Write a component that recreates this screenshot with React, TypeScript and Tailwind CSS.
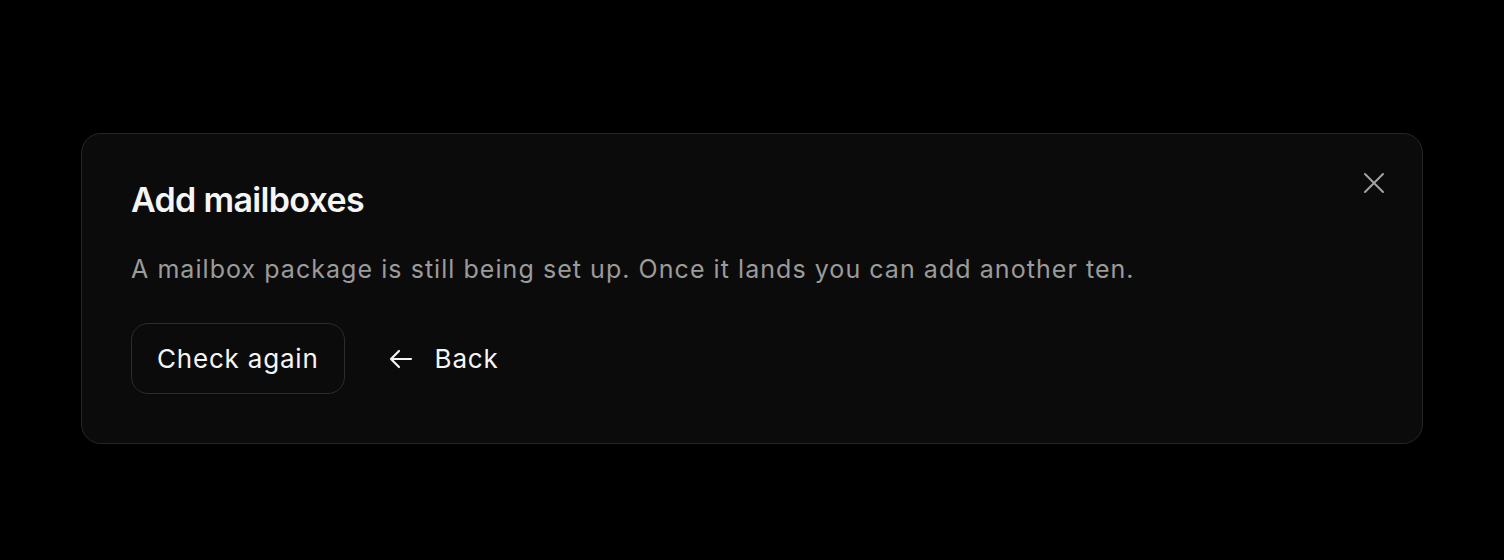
import React from "react";

export default function App() {
  return (
    <div className="min-h-[560px] w-full bg-black px-[81px] pt-[133px]" style={{ fontFamily: "Inter, 'Noto Sans', sans-serif" }}>
      <div className="relative rounded-[20px] border border-[#262626] bg-[#0b0b0b] px-[49px] pt-[46px] pb-[49px]">
        <button className="absolute right-[37px] top-[38px] text-[#a3a3a3]" aria-label="Close">
          <svg width="22" height="22" viewBox="0 0 22 22" fill="none" stroke="currentColor" strokeWidth="2" strokeLinecap="round">
            <path d="M2 2L20 20M20 2L2 20" />
          </svg>
        </button>
        <h2 className="text-[34px] font-semibold leading-[40px] tracking-[-0.02em] text-[#f5f5f5]">Add mailboxes</h2>
        <p className="mt-[33px] text-[25px] leading-[32px] tracking-[1.05px] text-[#9b9b9b]">
          A mailbox package is still being set up. Once it lands you can add another ten.
        </p>
        <div className="mt-[38px] flex items-center gap-[44px]">
          <button className="h-[71px] rounded-[17px] border border-[#2c2c2c] px-[25px] text-[26px] tracking-[0.8px] text-[#f5f5f5]">Check again</button>
          <button className="flex items-center gap-[22px] text-[26px] tracking-[0.8px] text-[#f5f5f5]">
            <svg width="24" height="20" viewBox="0 0 24 20" fill="none" stroke="currentColor" strokeWidth="2.2" strokeLinecap="round" strokeLinejoin="round">
              <path d="M22 10H2M10 2L2 10L10 18" />
            </svg>
            Back
          </button>
        </div>
      </div>
    </div>
  );
}
